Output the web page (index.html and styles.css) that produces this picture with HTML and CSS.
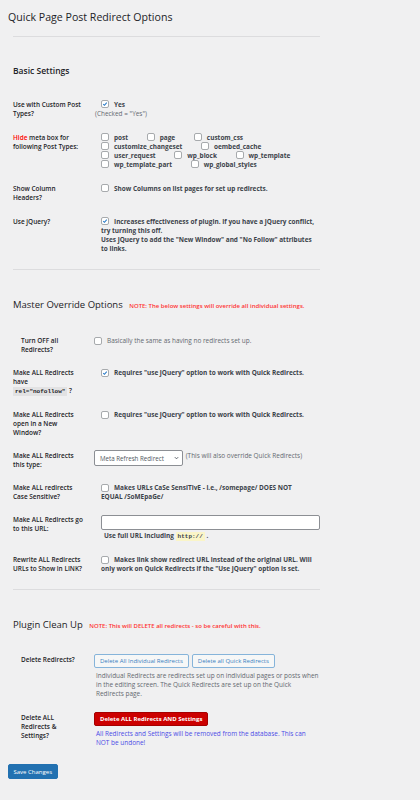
FILE: index.html
```html
<!DOCTYPE html>
<html lang="en">
<head>
    <meta charset="UTF-8">
    <meta name="viewport" content="width=device-width, initial-scale=1.0">
    <title>Quick Page Post Redirect Options</title>
    <link rel="stylesheet" href="styles.css">
</head>
<body>
    <div class="wrap">
        <h1>Quick Page Post Redirect Options</h1>
        <div class="panel">
            <hr class="sep sep-first">

            <h2 class="section-title basic">Basic Settings</h2>
            <div class="rows basic-rows">
                <div class="row">
                    <div class="row-label">Use with Custom Post<br>Types?</div>
                    <div class="row-field">
                        <label class="opt"><span class="cb"><svg viewBox="0 0 8 8"><path d="M1.6 4.2 3.3 5.8 6.3 2.2"/></svg></span>Yes</label><br>
                        <span class="hint pull">(Checked = "Yes")</span>
                    </div>
                </div>
                <div class="row">
                    <div class="row-label"><span class="red">Hide</span> meta box for<br>following Post Types:</div>
                    <div class="row-field">
                        <label class="opt type"><span class="cb"></span>post</label>
                        <label class="opt type"><span class="cb"></span>page</label>
                        <label class="opt type"><span class="cb"></span>custom_css</label><br>
                        <label class="opt type"><span class="cb"></span>customize_changeset</label>
                        <label class="opt type"><span class="cb"></span>oembed_cache</label><br>
                        <label class="opt type"><span class="cb"></span>user_request</label>
                        <label class="opt type"><span class="cb"></span>wp_block</label>
                        <label class="opt type"><span class="cb"></span>wp_template</label><br>
                        <label class="opt type"><span class="cb"></span>wp_template_part</label>
                        <label class="opt type"><span class="cb"></span>wp_global_styles</label>
                    </div>
                </div>
                <div class="row">
                    <div class="row-label">Show Column<br>Headers?</div>
                    <div class="row-field">
                        <label class="opt"><span class="cb"></span>Show Columns on list pages for set up redirects.</label>
                    </div>
                </div>
                <div class="row">
                    <div class="row-label">Use jQuery?</div>
                    <div class="row-field">
                        <label class="opt"><span class="cb"><svg viewBox="0 0 8 8"><path d="M1.6 4.2 3.3 5.8 6.3 2.2"/></svg></span>Increases effectiveness of plugin. If you have a jQuery conflict,<br>try turning this off.<br>Uses jQuery to add the "New Window" and "No Follow" attributes<br>to links.</label>
                    </div>
                </div>
            </div>

            <hr class="sep">

            <h2 class="section-title">Master Override Options <span class="note">NOTE: The below settings will override all individual settings.</span></h2>
            <div class="rows master-rows">
                <div class="row wide">
                    <div class="row-label">Turn OFF all<br>Redirects?</div>
                    <div class="row-field">
                        <label class="opt plain"><span class="cb"></span>Basically the same as having no redirects set up.</label>
                    </div>
                </div>
                <div class="row">
                    <div class="row-label">Make ALL Redirects<br>have<br><code>rel="nofollow"</code> ?</div>
                    <div class="row-field">
                        <label class="opt"><span class="cb"><svg viewBox="0 0 8 8"><path d="M1.6 4.2 3.3 5.8 6.3 2.2"/></svg></span>Requires "use jQuery" option to work with Quick Redirects.</label>
                    </div>
                </div>
                <div class="row">
                    <div class="row-label">Make ALL Redirects<br>open in a New<br>Window?</div>
                    <div class="row-field">
                        <label class="opt"><span class="cb"></span>Requires "use jQuery" option to work with Quick Redirects.</label>
                    </div>
                </div>
                <div class="row">
                    <div class="row-label">Make ALL Redirects<br>this type:</div>
                    <div class="row-field">
                        <span class="select">Meta Refresh Redirect <svg viewBox="0 0 6 4"><path d="M1 1 3 3 5 1"/></svg></span>
                        <span class="hint">(This will also override Quick Redirects)</span>
                    </div>
                </div>
                <div class="row">
                    <div class="row-label">Make ALL redirects<br>Case Sensitive?</div>
                    <div class="row-field">
                        <label class="opt"><span class="cb"></span>Makes URLs CaSe SensiTivE - i.e., /somepage/ DOES NOT<br>EQUAL /SoMEpaGe/</label>
                    </div>
                </div>
                <div class="row">
                    <div class="row-label">Make ALL Redirects go<br>to this URL:</div>
                    <div class="row-field">
                        <span class="url-input"></span>
                        <div class="url-help">Use full URL including <code class="mark">http://</code> .</div>
                    </div>
                </div>
                <div class="row">
                    <div class="row-label">Rewrite ALL Redirects<br>URLs to Show in LINK?</div>
                    <div class="row-field">
                        <label class="opt"><span class="cb"></span>Makes link show redirect URL instead of the original URL. Will<br>only work on Quick Redirects if the "Use jQuery" option is set.</label>
                    </div>
                </div>
            </div>

            <hr class="sep">

            <h2 class="section-title">Plugin Clean Up <span class="note">NOTE: This will DELETE all redirects - so be careful with this.</span></h2>
            <div class="rows cleanup-rows">
                <div class="row wide">
                    <div class="row-label nudge">Delete Redirects?</div>
                    <div class="row-field">
                        <div class="btn-group">
                            <button class="btn">Delete All Individual Redirects</button>
                            <button class="btn">Delete all Quick Redirects</button>
                        </div>
                        <p class="description">Individual Redirects are redirects set up on individual pages or posts when<br>in the editing screen. The Quick Redirects are set up on the Quick<br>Redirects page.</p>
                    </div>
                </div>
                <div class="row wide">
                    <div class="row-label nudge">Delete ALL<br>Redirects &amp;<br>Settings?</div>
                    <div class="row-field">
                        <button class="btn btn-danger">Delete ALL Redirects AND Settings</button>
                        <p class="warning">All Redirects and Settings will be removed from the database. This can<br>NOT be undone!</p>
                    </div>
                </div>
            </div>
        </div>

        <button class="btn btn-primary">Save Changes</button>
    </div>
</body>
</html>
```

FILE: styles.css
```css
body {
    margin: 0;
    background: #f0f0f1;
    color: #3c434a;
    font-family: "Open Sans", "Noto Sans", sans-serif;
    font-size: 6.45px;
    line-height: 9px;
}
.wrap {
    padding: 10px 0 20px 8px;
}
h1 {
    margin: 0;
    font-size: 10.6px;
    line-height: 14px;
    font-weight: 400;
    color: #1d2327;
}
.panel {
    margin-left: 5px;
    width: 307px;
}
.sep {
    margin: 9px 0 0;
    border: 0;
    border-top: 1px solid #dcdcde;
}
.sep-first {
    margin-top: 12px;
}
.section-title {
    margin: 29px 0 15px;
    font-size: 9.5px;
    line-height: 12px;
    font-weight: 400;
    color: #1d2327;
}
.section-title.basic {
    margin-top: 28px;
    font-size: 8.5px;
    font-weight: 600;
}
.note {
    margin-left: 4px;
    color: #f33;
    font-size: 6px;
    font-weight: 600;
}
.master-rows {
    margin-top: 17px;
}
.cleanup-rows {
    margin-top: 15px;
}
.row {
    display: grid;
    grid-template-columns: 88px 1fr;
    padding: 7px 0;
}
.basic-rows .row {
    padding: 7.5px 0;
}
.row.wide {
    grid-template-columns: 81px 1fr;
}
.row.wide .row-label {
    padding-left: 8px;
}
.row-label {
    font-weight: 600;
    color: #1d2327;
}
.row-label.nudge {
    padding-top: 1px;
}
.red {
    color: #f00;
}
.opt {
    font-weight: 700;
}
.opt.plain {
    font-weight: 400;
    color: #646970;
}
.type {
    margin-right: 17px;
}
.cb {
    display: inline-block;
    width: 8px;
    height: 8px;
    box-sizing: border-box;
    border: 1px solid #a7aaad;
    border-radius: 2px;
    background: #fff;
    vertical-align: -1.5px;
    margin-right: 5px;
}
.cb svg {
    display: block;
    width: 6px;
    height: 6px;
}
.cb path {
    fill: none;
    stroke: #2b7bc7;
    stroke-width: 1.4;
}
.hint {
    color: #646970;
}
.hint.pull {
    margin-left: -6px;
}
code {
    font-family: "Liberation Mono", "DejaVu Sans Mono", monospace;
    font-size: 6px;
    background: #e2e2e3;
    padding: 1px 2px;
}
.select {
    display: inline-flex;
    align-items: center;
    justify-content: space-between;
    width: 89px;
    height: 16px;
    box-sizing: border-box;
    margin: -1px 1px 0 -7px;
    padding: 0 3px 0 5px;
    border: 1px solid #8c8f94;
    border-radius: 2px;
    background: #fff;
    color: #50575e;
    font-size: 6.2px;
    vertical-align: top;
}
.select svg {
    width: 5px;
    height: 4px;
}
.select path {
    fill: none;
    stroke: #50575e;
    stroke-width: 1.1;
}
.url-input {
    display: block;
    width: 219px;
    height: 15px;
    box-sizing: border-box;
    border: 1px solid #8c8f94;
    border-radius: 2px;
    background: #fff;
}
.url-help {
    margin: 1px 0 0 3px;
    font-weight: 700;
}
code.mark {
    background: #faf5c8;
    font-weight: 700;
}
.btn-group {
    display: flex;
    gap: 3px;
}
.btn {
    height: 14px;
    box-sizing: border-box;
    margin: 0;
    padding: 0 5px;
    border: 1px solid #86b4da;
    border-radius: 2px;
    background: #f6f7f7;
    color: #3a80c0;
    font-family: inherit;
    font-size: 6px;
    line-height: 12px;
    cursor: pointer;
}
.btn-danger {
    display: block;
    background: #cc0000;
    border-color: #a50000;
    color: #fff;
    font-weight: 700;
}
.btn-primary {
    display: block;
    margin-top: 10px;
    padding: 0 4.5px;
    height: 15px;
    background: #2271b1;
    border-color: #2271b1;
    color: #fff;
}
.description {
    margin: 2.5px 0 0 2px;
    color: #646970;
}
.warning {
    margin: 3.5px 0 0 2px;
    color: #4b4be6;
}
```
